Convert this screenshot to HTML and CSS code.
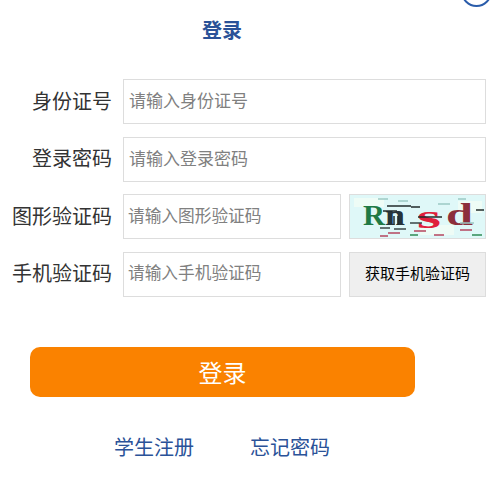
FILE: index.html
```html
<!DOCTYPE html>
<html>

<head>
    <meta charset="utf-8">
    <meta name="viewport" content="width=device-width">
    <title>登录</title>
    <link rel="stylesheet" href="styles.css">
</head>

<body>
    <div class="login">
        <span class="close"></span>
        <h2 class="title">登录</h2>
        <div class="form">
            <div class="row">
                <label class="name">身份证号</label>
                <input class="text" type="text" placeholder="请输入身份证号">
            </div>
            <div class="row">
                <label class="name">登录密码</label>
                <input class="text" type="text" placeholder="请输入登录密码">
            </div>
            <div class="row">
                <label class="name">图形验证码</label>
                <input class="text short" type="text" placeholder="请输入图形验证码">
                <div class="captcha">
                    <svg width="135" height="43" viewBox="0 0 135 43">
                        <rect width="135" height="43" fill="#dff8f8"></rect>
                        <g fill="#eefcf6">
                            <rect x="4" y="3" width="30" height="9"></rect>
                            <rect x="70" y="30" width="34" height="10"></rect>
                            <rect x="108" y="6" width="24" height="12"></rect>
                        </g>
                        <text class="cap-r" x="13" y="30" textLength="22" lengthAdjust="spacingAndGlyphs">R</text>
                        <text class="cap-n" x="35" y="30" textLength="20" lengthAdjust="spacingAndGlyphs">n</text>
                        <text class="cap-s" x="67" y="33" textLength="24" lengthAdjust="spacingAndGlyphs">s</text>
                        <text class="cap-d" x="96" y="30" textLength="27" lengthAdjust="spacingAndGlyphs">d</text>
                        <g stroke-width="1.5">
                            <path d="M28 4h10M48 6h10M88 9h12M108 4h8M110 28h14" stroke="#9cc9c4"></path>
                            <path d="M37 11h24M33 16h14M61 12h9M68 22h24M126 15h8M44 21v9M48 21v9" stroke="#222b2b"></path>
                            <path d="M30 33h10M44 34h12M60 28h12" stroke="#3a4646"></path>
                            <path d="M38 38h12M64 36h12M84 40h10M110 35h12M30 41h8" stroke="#b5455f"></path>
                            <path d="M122 40h10M60 40h8" stroke="#2f8a55"></path>
                        </g>
                    </svg>
                </div>
            </div>
            <div class="row">
                <label class="name">手机验证码</label>
                <input class="text short" type="text" placeholder="请输入手机验证码">
                <button class="sms">获取手机验证码</button>
            </div>
        </div>
        <button class="submit">登录</button>
        <div class="links">
            <a href="#">学生注册</a>
            <a href="#">忘记密码</a>
        </div>
    </div>
</body>

</html>
```

FILE: styles.css
```css
* {
    box-sizing: border-box;
}

html,
body {
    margin: 0;
    padding: 0;
    background: #fff;
    overflow: hidden;
}

body {
    height: 478px;
    font-family: "Noto Sans CJK SC", "Liberation Sans", sans-serif;
}

.login {
    position: relative;
    width: 498px;
    height: 478px;
}

.close {
    position: absolute;
    left: 461px;
    top: -24px;
    width: 31px;
    height: 31px;
    border: 2px solid #2a5caa;
    border-radius: 50%;
}

.title {
    margin: 0;
    padding-top: 15px;
    padding-right: 54px;
    height: 79px;
    text-align: center;
    font-size: 20px;
    line-height: 29px;
    font-weight: bold;
    color: #2a5298;
}

.form {
    display: flex;
    flex-direction: column;
    gap: 12.5px;
}

.row {
    display: flex;
    align-items: center;
    height: 45px;
}

.name {
    width: 112px;
    margin-right: 11px;
    padding-bottom: 3px;
    text-align: right;
    font-size: 20px;
    color: #333;
    white-space: nowrap;
}

.text {
    width: 363px;
    height: 45px;
    padding: 0 5px 4px;
    border: 1px solid #ddd;
    outline: none;
    font-family: inherit;
    font-size: 17px;
    color: #333;
}

.text::placeholder {
    color: #808080;
    opacity: 1;
}

.short {
    width: 218px;
    padding: 0 4px 4px;
    font-size: 16.7px;
}

.captcha {
    width: 137px;
    height: 45px;
    margin-left: 8px;
    border: 1px solid #ddd;
}

.captcha svg {
    display: block;
}

.captcha text {
    font-family: "Liberation Serif", serif;
    font-weight: bold;
    font-size: 30px;
}

.captcha .cap-s {
    fill: #e0203c;
    font-size: 34px;
}

.captcha .cap-d {
    fill: #8c2f3c;
    font-size: 32px;
}

.cap-r {
    fill: #1f7a45;
}

.cap-n {
    fill: #27343a;
}

.sms {
    width: 137px;
    height: 45px;
    margin-left: 8px;
    padding: 0 0 3px;
    border: 1px solid #ddd;
    background: #efefef;
    font-family: inherit;
    font-size: 15px;
    color: #000;
}

.submit {
    display: block;
    width: 385px;
    height: 50px;
    margin: 50px 0 0 30px;
    border: 0;
    border-radius: 10px;
    background: #fa8200;
    font-family: inherit;
    font-size: 24px;
    color: #fff;
}

.links {
    display: flex;
    gap: 56px;
    margin-top: 35px;
    padding-left: 114px;
}

.links a {
    font-size: 20px;
    line-height: 29px;
    color: #2a5298;
    text-decoration: none;
}
```
